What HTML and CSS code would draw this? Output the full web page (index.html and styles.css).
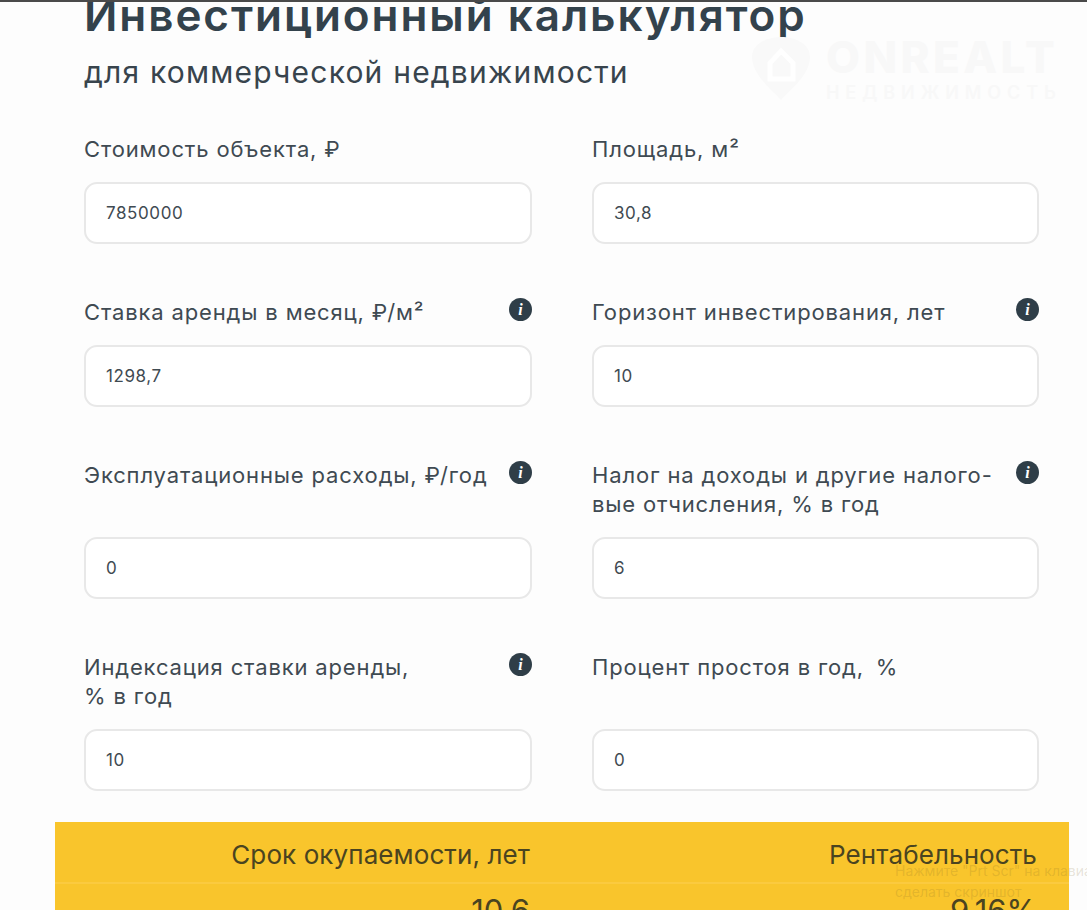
FILE: index.html
```html
<!DOCTYPE html>
<html lang="ru">
<head>
<meta charset="utf-8">
<title>Инвестиционный калькулятор</title>
<link rel="stylesheet" href="styles.css">
</head>
<body>
<div class="page">
  <div class="topline"></div>
  <header class="head">
    <h1 class="title">Инвестиционный калькулятор</h1>
    <p class="subtitle">для коммерческой недвижимости</p>
  </header>
  <div class="watermark">
    <svg class="wm-icon" width="62" height="66" viewBox="0 0 62 66"><path d="M31 65C18 52 2 38 2 22C2 9 16 2 31 2C46 2 60 9 60 22C60 38 44 52 31 65Z" fill="#f9f9f9"/><path d="M20 44V28L31 16L43 28V44Z" fill="none" stroke="#fff" stroke-width="5"/></svg>
    <div>
      <div class="wm-name">ONREALT</div>
      <div class="wm-sub">НЕДВИЖИМОСТЬ</div>
    </div>
  </div>
  <form class="fields">
    <div class="field"><div class="label"><span>Стоимость объекта, ₽</span></div><div class="input">7850000</div></div>
    <div class="field"><div class="label"><span>Площадь, м²</span></div><div class="input">30,8</div></div>
    <div class="field"><div class="label"><span>Ставка аренды в месяц, ₽/м²</span><i class="info">i</i></div><div class="input">1298,7</div></div>
    <div class="field"><div class="label"><span>Горизонт инвестирования, лет</span><i class="info">i</i></div><div class="input">10</div></div>
    <div class="field"><div class="label"><span>Эксплуатационные расходы, ₽/год</span><i class="info">i</i></div><div class="input">0</div></div>
    <div class="field"><div class="label"><span>Налог на доходы и другие налого-<br>вые отчисления, % в год</span><i class="info">i</i></div><div class="input">6</div></div>
    <div class="field"><div class="label"><span>Индексация ставки аренды,<br>% в год</span><i class="info">i</i></div><div class="input">10</div></div>
    <div class="field"><div class="label"><span>Процент простоя в год, &#8201;%</span></div><div class="input">0</div></div>
  </form>
  <section class="results">
    <div class="res-head"><div>Срок окупаемости, лет</div><div>Рентабельность</div></div>
    <div class="res-vals"><div>10,6</div><div>9,16%</div></div>
  </section>
  <div class="hint">Нажмите "Prt Scr" на клавиатуре, чтобы<br>сделать скриншот</div>
</div>
</body>
</html>
```
FILE: styles.css
```css
* { box-sizing: border-box; }
html, body { margin: 0; padding: 0; height: 100%; overflow: hidden; background: #fdfdfd; }
body { font-family: Inter, "Noto Sans", sans-serif; color: #38444d; }
.page { position: relative; width: 1087px; height: 910px; overflow: hidden; }
.topline { position: relative; z-index: 1; height: 2px; background: #4a4a4a; }
.head { padding-left: 84px; margin-top: -13px; }
.title { margin: 0; font-size: 44px; line-height: 52px; font-weight: 600; color: #33424c; letter-spacing: 1.95px; white-space: nowrap; }
.subtitle { margin: 13px 0 0; font-size: 30px; line-height: 36px; font-weight: 400; color: #38444d; letter-spacing: 1.2px; }
.fields { display: grid; grid-template-columns: 448px 447px; column-gap: 60px; row-gap: 53.75px; margin: 45px 0 0 84px; width: 955px; }
.field { display: flex; flex-direction: column; }
.label { flex: 1; display: flex; justify-content: space-between; align-items: flex-start; font-size: 22px; line-height: 29.5px; letter-spacing: 0.85px; margin-bottom: 17.5px; color: #3f4a52; white-space: nowrap; }
.info { flex: none; width: 23px; height: 23px; border-radius: 50%; background: #2f3e48; color: #fff; font: italic 700 16px/23px "Liberation Serif", serif; letter-spacing: 0; text-align: center; }
.input { height: 62px; border: 2px solid #e8e8e8; border-radius: 13px; background: #fff; padding-left: 20px; font-size: 17px; line-height: 58px; letter-spacing: 0.6px; color: #3f4a52; }
.results { margin: 31px 0 0 55px; width: 1014px; background: #f9c52c; color: #4a4420; }
.res-head, .res-vals { display: grid; grid-template-columns: 475px 507px; padding-right: 32px; text-align: right; }
.res-head { height: 62px; font-size: 26px; line-height: 66px; letter-spacing: 0.1px; border-bottom: 2px solid #fbca3f; }
.res-vals { padding-top: 4px; font-size: 31px; line-height: 46px; }
.watermark { position: absolute; left: 750px; top: 32px; display: flex; gap: 14px; align-items: flex-start; color: #f8f8f8; }
.wm-icon { margin-top: 3px; }
.wm-name { font-size: 44px; line-height: 50px; font-weight: 800; letter-spacing: 3.4px; }
.wm-sub { font-size: 18px; line-height: 22px; font-weight: 600; letter-spacing: 5.9px; }
.hint { position: absolute; left: 895px; top: 860px; font-size: 14px; line-height: 21px; white-space: nowrap; color: rgba(120, 100, 40, 0.18); }
```
